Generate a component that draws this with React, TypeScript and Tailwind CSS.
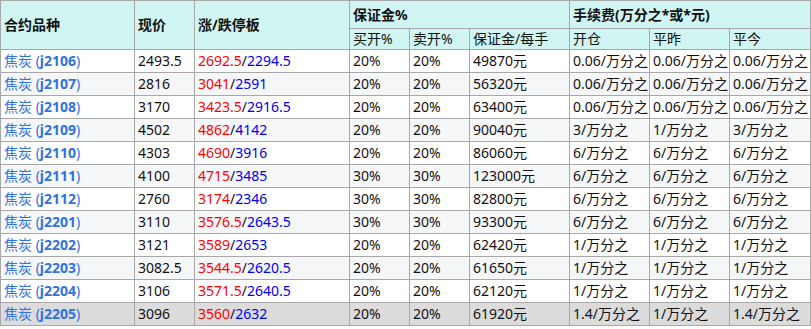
const rows = [
  ['j2106', '2493.5', '2692.5', '2294.5', '20%', '20%', '49870元', '0.06/万分之', '0.06/万分之', '0.06/万分之'],
  ['j2107', '2816', '3041', '2591', '20%', '20%', '56320元', '0.06/万分之', '0.06/万分之', '0.06/万分之'],
  ['j2108', '3170', '3423.5', '2916.5', '20%', '20%', '63400元', '0.06/万分之', '0.06/万分之', '0.06/万分之'],
  ['j2109', '4502', '4862', '4142', '20%', '20%', '90040元', '3/万分之', '1/万分之', '3/万分之'],
  ['j2110', '4303', '4690', '3916', '20%', '20%', '86060元', '6/万分之', '6/万分之', '6/万分之'],
  ['j2111', '4100', '4715', '3485', '30%', '30%', '123000元', '6/万分之', '6/万分之', '6/万分之'],
  ['j2112', '2760', '3174', '2346', '30%', '30%', '82800元', '6/万分之', '6/万分之', '6/万分之'],
  ['j2201', '3110', '3576.5', '2643.5', '30%', '30%', '93300元', '6/万分之', '6/万分之', '6/万分之'],
  ['j2202', '3121', '3589', '2653', '20%', '20%', '62420元', '1/万分之', '1/万分之', '1/万分之'],
  ['j2203', '3082.5', '3544.5', '2620.5', '20%', '20%', '61650元', '1/万分之', '1/万分之', '1/万分之'],
  ['j2204', '3106', '3571.5', '2640.5', '20%', '20%', '62120元', '1/万分之', '1/万分之', '1/万分之'],
  ['j2205', '3096', '3560', '2632', '20%', '20%', '61920元', '1.4/万分之', '1/万分之', '1.4/万分之'],
];

const cell = 'border border-[#a8a8a8] px-[3px] text-left align-middle';

const App = () => {
  return (
    <div
      className="w-[811px] h-[329px] bg-white overflow-hidden text-[14px] text-[#111] leading-[20px]"
      style={{ fontFamily: '"Noto Sans", "Noto Sans CJK SC", sans-serif' }}
    >
      <table className="table-fixed border-collapse w-[810px]">
        <colgroup>
          <col className="w-[134px]" />
          <col className="w-[60px]" />
          <col className="w-[155px]" />
          <col className="w-[60px]" />
          <col className="w-[60px]" />
          <col className="w-[100px]" />
          <col className="w-[80px]" />
          <col className="w-[80px]" />
          <col className="w-[81px]" />
        </colgroup>
        <thead className="bg-[#d0f5f2]">
          <tr className="h-[28px]">
            <th rowSpan={2} className={`${cell} font-bold`}>合约品种</th>
            <th rowSpan={2} className={`${cell} font-bold`}>现价</th>
            <th rowSpan={2} className={`${cell} font-bold`}>涨/跌停板</th>
            <th colSpan={3} className={`${cell} font-bold`}>保证金%</th>
            <th colSpan={3} className={`${cell} font-bold`}>手续费(万分之*或*元)</th>
          </tr>
          <tr className="h-[20px]">
            <th className={`${cell} font-normal`}>买开%</th>
            <th className={`${cell} font-normal`}>卖开%</th>
            <th className={`${cell} font-normal`}>保证金/每手</th>
            <th className={`${cell} font-normal`}>开仓</th>
            <th className={`${cell} font-normal`}>平昨</th>
            <th className={`${cell} font-normal`}>平今</th>
          </tr>
        </thead>
        <tbody>
          {rows.map((r, i) => (
            <tr
              key={r[0]}
              className={`h-[23px] ${i === rows.length - 1 ? 'bg-[#dcdcdc]' : i % 2 === 1 ? 'bg-[#f6f7f9]' : 'bg-white'}`}
            >
              <td className={cell}>
                <span className="text-[#2f72e0]">
                  焦炭 (<span className="font-bold">{r[0]}</span>)
                </span>
              </td>
              <td className={cell}>{r[1]}</td>
              <td className={cell}>
                <span className="text-[#ff0000]">{r[2]}</span>/<span className="text-[#0000ee]">{r[3]}</span>
              </td>
              {r.slice(4).map((v, j) => (
                <td key={j} className={`${cell} whitespace-nowrap`}>{v}</td>
              ))}
            </tr>
          ))}
        </tbody>
      </table>
    </div>
  );
};

export default App;
